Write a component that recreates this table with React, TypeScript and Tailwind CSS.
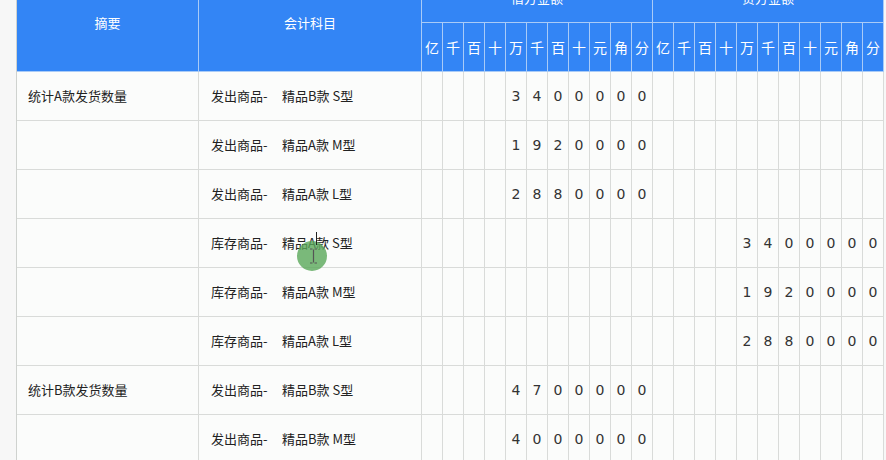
const units = ["亿", "千", "百", "十", "万", "千", "百", "十", "元", "角", "分"];

type Row = { summary: string; account: string; debit?: string; credit?: string };

const rows: Row[] = [
  { summary: "统计A款发货数量", account: "发出商品-     精品B款 S型", debit: "3400000" },
  { summary: "", account: "发出商品-     精品A款 M型", debit: "1920000" },
  { summary: "", account: "发出商品-     精品A款 L型", debit: "2880000" },
  { summary: "", account: "库存商品-     精品A款 S型", credit: "3400000" },
  { summary: "", account: "库存商品-     精品A款 M型", credit: "1920000" },
  { summary: "", account: "库存商品-     精品A款 L型", credit: "2880000" },
  { summary: "统计B款发货数量", account: "发出商品-     精品B款 S型", debit: "4700000" },
  { summary: "", account: "发出商品-     精品B款 M型", debit: "4000000" },
];

// pad an amount out to the 11 digit slots (亿 .. 分)
function toDigits(amount?: string) {
  if (!amount) return Array(11).fill("");
  const padded = amount.padStart(11, " ");
  return padded.split("").map((c) => (c === " " ? "" : c));
}

export default function App() {
  return (
    <div
      className="relative h-[460px] w-[886px] overflow-hidden bg-[#f7f7f7]"
      style={{ fontFamily: '"Noto Sans CJK SC", "Noto Sans", sans-serif' }}
    >
      <div className="ml-[16px] mt-[-26px] grid w-[868px] grid-cols-[182px_223px_repeat(22,21px)] border-l border-[#cfd2cf] bg-[#fbfcfb]">
        {/* header */}
        <div className="row-span-2 flex items-center justify-center border-r border-b border-[#a9cbf7] bg-[#3385f5] text-[13px] text-white">
          摘要
        </div>
        <div className="row-span-2 flex items-center justify-center border-r border-b border-[#a9cbf7] bg-[#3385f5] text-[13px] text-white">
          会计科目
        </div>
        <div className="col-span-11 flex h-[49px] items-center justify-center border-r border-b border-[#a9cbf7] bg-[#3385f5] text-[13px] text-white">
          借方金额
        </div>
        <div className="col-span-11 flex h-[49px] items-center justify-center border-r border-b border-[#a9cbf7] bg-[#3385f5] text-[13px] text-white">
          贷方金额
        </div>
        {[...units, ...units].map((u, i) => (
          <div
            key={"u" + i}
            className="flex h-[49px] items-center justify-center border-r border-b border-[#a9cbf7] bg-[#3385f5] text-[14px] text-white"
          >
            {u}
          </div>
        ))}

        {/* body */}
        {rows.map((r, ri) => (
          <div key={ri} className="contents">
            <div className="flex h-[49px] items-center border-r border-b border-[#d9dbd9] pl-[11px] text-[13px] text-[#222]">
              {r.summary}
            </div>
            <div className="flex h-[49px] items-center whitespace-pre border-r border-b border-[#d9dbd9] pl-[12px] text-[13px] text-[#222]">
              {r.account}
            </div>
            {[...toDigits(r.debit), ...toDigits(r.credit)].map((d, di) => (
              <div
                key={di}
                className="flex h-[49px] items-center justify-center border-r border-b border-[#d9dbd9] text-[14px] text-[#333]"
                style={{ fontFamily: '"DejaVu Sans", sans-serif' }}
              >
                {d}
              </div>
            ))}
          </div>
        ))}
      </div>

      {/* click indicator + text cursor */}
      <div className="pointer-events-none absolute left-[297px] top-[241px] h-[30px] w-[30px] rounded-full bg-[#5aa85a]/80" />
      <div className="pointer-events-none absolute left-[316px] top-[232px] h-[13px] w-px bg-[#222]" />
      <svg className="pointer-events-none absolute left-[309px] top-[248px]" width="9" height="16" viewBox="0 0 9 16">
        <path d="M1 1h2.5M5.5 1H8M4.5 1.5v13M1 15h2.5M5.5 15H8" stroke="#555" strokeWidth="1.2" fill="none" />
      </svg>
    </div>
  );
}
